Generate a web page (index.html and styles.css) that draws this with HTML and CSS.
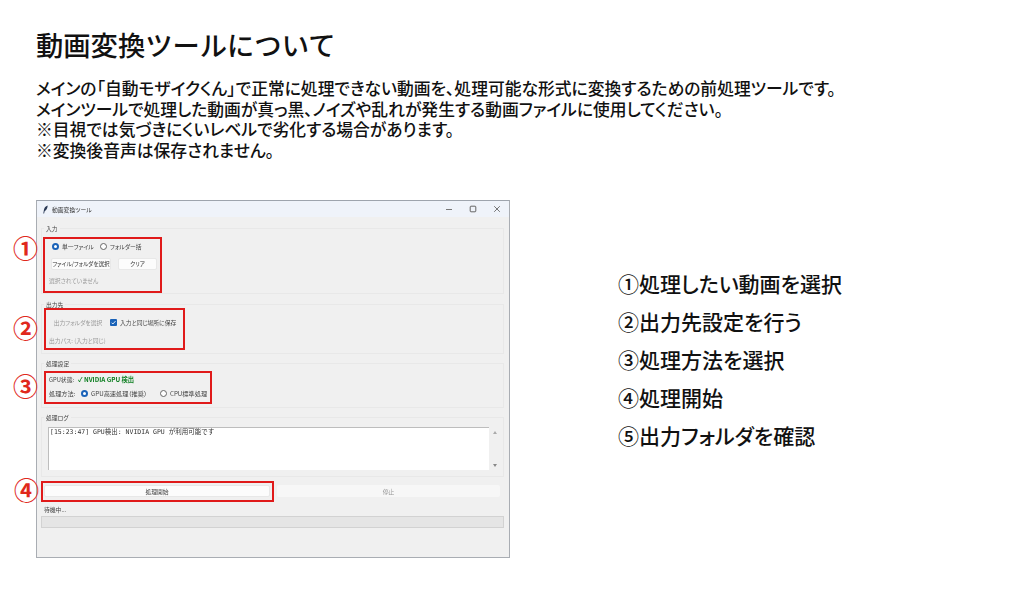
FILE: index.html
```html
<!DOCTYPE html>
<html lang="ja">
<head>
<meta charset="utf-8">
<title>動画変換ツールについて</title>
<link rel="stylesheet" href="styles.css">
</head>
<body>
<main class="slide">
  <h1 class="title">動画変換ツールについて</h1>
  <div class="intro">
    <p>メインの「自動モザイクくん」で正常に処理できない動画を、処理可能な形式に変換するための前処理ツールです。</p>
    <p>メインツールで処理した動画が真っ黒、ノイズや乱れが発生する動画ファイルに使用してください。</p>
    <p>※目視では気づきにくいレベルで劣化する場合があります。</p>
    <p>※変換後音声は保存されません。</p>
  </div>
  <div class="content">
    <section class="window">
      <header class="titlebar">
        <svg class="feather" viewBox="0 0 8 10"><path d="M6.5 .5C4 1 2.2 3.500 2 6.500L1.500 9.500L2.400 9.500L3 7C5 6 6.500 3.500 6.500 .5Z" fill="#2b3a55"/></svg>
        <span class="wintitle">動画変換ツール</span>
        <span class="controls">
          <svg viewBox="0 0 8 8"><path d="M1 4.500H7" stroke="#777" stroke-width="1"/></svg>
          <svg viewBox="0 0 8 8"><rect x="1.200" y="1.200" width="5.600" height="5.600" rx=".8" fill="none" stroke="#666" stroke-width="1"/></svg>
          <svg viewBox="0 0 8 8"><path d="M1.200 1.200L6.800 6.800M6.800 1.200L1.200 6.800" stroke="#666" stroke-width=".9"/></svg>
        </span>
      </header>
      <div class="winbody">
        <div class="group g-input">
          <span class="legend">入力</span>
          <div class="line l-modes">
            <span class="radio on"></span><span class="t mode1">単一ファイル</span>
            <span class="radio"></span><span class="t">フォルダー括</span>
          </div>
          <div class="line l-buttons">
            <span class="btn b-select">ファイル/フォルダを選択</span>
            <span class="btn b-clear">クリア</span>
          </div>
          <div class="muted s-none">選択されていません</div>
        </div>
        <div class="group g-output">
          <span class="legend">出力先</span>
          <div class="line l-out">
            <span class="btn-flat muted">出力フォルダを選択</span>
            <span class="check"><svg viewBox="0 0 8 8"><path d="M1.800 4.200L3.300 5.700L6.300 2.400" fill="none" stroke="#fff" stroke-width="1"/></svg></span>
            <span class="t">入力と同じ場所に保存</span>
          </div>
          <div class="muted s-path">出力パス: (入力と同じ)</div>
        </div>
        <div class="group g-settings">
          <span class="legend">処理設定</span>
          <div class="line l-gpu"><span class="t gpu-label">GPU状態:</span><span class="gpu">✓ NVIDIA GPU 検出</span></div>
          <div class="line l-method">
            <span class="t method-label">処理方法:</span>
            <span class="radio on"></span><span class="t m-gpu">GPU高速処理（推奨）</span>
            <span class="radio r-cpu"></span><span class="t">CPU標準処理</span>
          </div>
        </div>
        <div class="group g-log">
          <span class="legend">処理ログ</span>
          <div class="logrow">
            <div class="logbox">[15:23:47] GPU検出: NVIDIA GPU が利用可能です</div>
            <div class="scroll"><i class="up"></i><i class="down"></i></div>
          </div>
        </div>
        <div class="actions">
          <span class="action start">処理開始</span>
          <span class="action stop">停止</span>
        </div>
        <div class="t waiting">待機中...</div>
        <div class="progress"></div>
      </div>
      <div class="mark m1"></div>
      <div class="mark m2"></div>
      <div class="mark m3"></div>
      <div class="mark m4"></div>
    </section>
    <ol class="steps">
      <li>①処理したい動画を選択</li>
      <li>②出力先設定を行う</li>
      <li>③処理方法を選択</li>
      <li>④処理開始</li>
      <li>⑤出力フォルダを確認</li>
    </ol>
  </div>
  <span class="callout c1">①</span>
  <span class="callout c2">②</span>
  <span class="callout c3">③</span>
  <span class="callout c4">④</span>
</main>
</body>
</html>
```
FILE: styles.css
```css
* { box-sizing: border-box; }
html, body { margin: 0; padding: 0; background: #fff; }
body { font-family: "Noto Sans CJK JP", "Noto Sans", sans-serif; color: #111; overflow: hidden; }
.slide { position: relative; width: 1024px; height: 607px; padding: 25px 0 0 36px; overflow: hidden; }
.title { margin: 0; font-size: 27.300px; line-height: 38px; font-weight: 500; height: 38px; }
.intro { margin-top: 17px; font-family: "Liberation Sans", "Noto Sans CJK JP", sans-serif; font-size: 16.800px; font-weight: 500; line-height: 20.700px; font-feature-settings: "palt"; height: 83px; }
.intro p { margin: 0; white-space: nowrap; }
.content { display: flex; margin-top: 37px; align-items: flex-start; }

.window { position: relative; width: 474px; height: 358px; background: #f0f0f0; border: 1px solid #a9adb3; border-top-color: #9ea4ad; font-size: 5.800px; font-feature-settings: "palt"; color: #444; flex: none; filter: blur(.3px); }
.titlebar { display: flex; align-items: center; height: 16px; background: #eff3fa; padding: 0 0 0 5px; }
.feather { width: 7px; height: 9px; }
.wintitle { margin-left: 3px; font-size: 5.800px; color: #333; }
.controls { display: flex; margin-left: auto; gap: 16px; padding-right: 8px; }
.controls svg { width: 8px; height: 8px; }
.winbody { padding: 11px 5px 0 4px; }
.group { position: relative; border: 1px solid #e8e8e8; padding-left: 7px; }
.legend { position: absolute; top: -5px; left: 2px; padding: 0 2px; background: #f0f0f0; font-size: 5.800px; line-height: 9px; color: #444; }
.line { display: flex; align-items: center; }
.t { white-space: nowrap; line-height: 9px; }
.muted { color: #999; white-space: nowrap; line-height: 9px; }
.radio { width: 7px; height: 7px; border-radius: 50%; border: 1px solid #666; background: #fff; margin-right: 3px; flex: none; }
.radio.on { border: 2px solid #1a62b8; background: #fff; }
.g-input { height: 66px; }
.l-modes { margin: 13px 0 0 3px; }
.mode1 { margin-right: 8px; width: 30px; }
.l-buttons { margin: 7px 0 0 2px; gap: 7px; }
.btn { display: flex; align-items: center; justify-content: center; height: 12px; flex: none; background: #fcfcfc; border: 1px solid #e8e8e8; border-radius: 2px; white-space: nowrap; font-size: 5.600px; color: #333; }
.b-select { width: 60px; }
.b-clear { width: 39px; }
.s-none { margin-top: 6px; }
.g-output { height: 50px; margin-top: 10px; }
.l-out { margin: 13px 0 0 2px; }
.btn-flat { margin-right: 5px; width: 54px; flex: none; text-align: center; }
.check { width: 7px; height: 7px; background: #1a62b8; border-radius: 1px; margin-right: 3px; display: flex; flex: none; }
.check svg { width: 100%; height: 100%; }
.s-path { margin-top: 9px; }
.g-settings { height: 45px; margin-top: 9px; }
.l-gpu { margin-top: 11px; }
.gpu-label { width: 29px; flex: none; }
.gpu { color: #0a7d1e; font-weight: 700; white-space: nowrap; line-height: 9px; font-size: 6.300px; }
.l-method { margin-top: 5px; }
.l-method .t { font-size: 6.200px; }
.method-label { width: 32px; flex: none; }
.m-gpu { width: 69px; flex: none; }
.g-log { height: 60px; margin-top: 9px; padding: 9px 3px 0 6px; }
.logrow { display: flex; }
.logbox { width: 441px; height: 43px; background: #fff; border-top: 1px solid #bdbdbd; border-left: 1px solid #bdbdbd; font-family: "DejaVu Sans Mono", "Noto Sans CJK JP", monospace; font-feature-settings: normal; font-size: 6.500px; line-height: 9px; padding: 0 1px; color: #333; white-space: nowrap; }
.scroll { flex: 1; display: flex; flex-direction: column; justify-content: space-between; align-items: center; padding: 4px 0 3px; }
.scroll i { width: 0; height: 0; border-left: 2px solid transparent; border-right: 2px solid transparent; }
.up { border-bottom: 3px solid #aaa; }
.down { border-top: 3px solid #888; }
.actions { display: flex; gap: 7px; margin: 8px 4px 0 3px; }
.action { display: flex; align-items: center; justify-content: center; height: 12px; border-radius: 2px; }
.start { width: 226px; background: #fcfcfc; border: 1px solid #e8e8e8; color: #444; }
.stop { flex: 1; background: #f7f7f7; color: #999; }
.waiting { margin-top: 8px; margin-left: 3px; }
.progress { height: 12px; margin-top: 2px; background: #e5e5e5; border: 1px solid #d2d2d2; }

.mark { position: absolute; border: 2px solid #e01a1a; }
.m1 { left: 6px; top: 36px; width: 119px; height: 56px; }
.m2 { left: 7px; top: 107px; width: 141px; height: 42px; }
.m3 { left: 7px; top: 170px; width: 168px; height: 33px; }
.m4 { left: 4px; top: 280px; width: 233px; height: 21px; }

.steps { list-style: none; margin: 0 0 0 108px; padding: 64px 0 0; font-size: 21px; font-weight: 500; line-height: 38px; white-space: nowrap; font-feature-settings: "palt"; }

.callout { position: absolute; left: 13px; width: 24px; text-align: center; font-size: 25px; line-height: 26px; color: #e0281c; font-weight: 700; }
.c1 { top: 234px; }
.c2 { top: 314px; }
.c3 { top: 372px; }
.c4 { top: 476px; left: 14px; }
```
